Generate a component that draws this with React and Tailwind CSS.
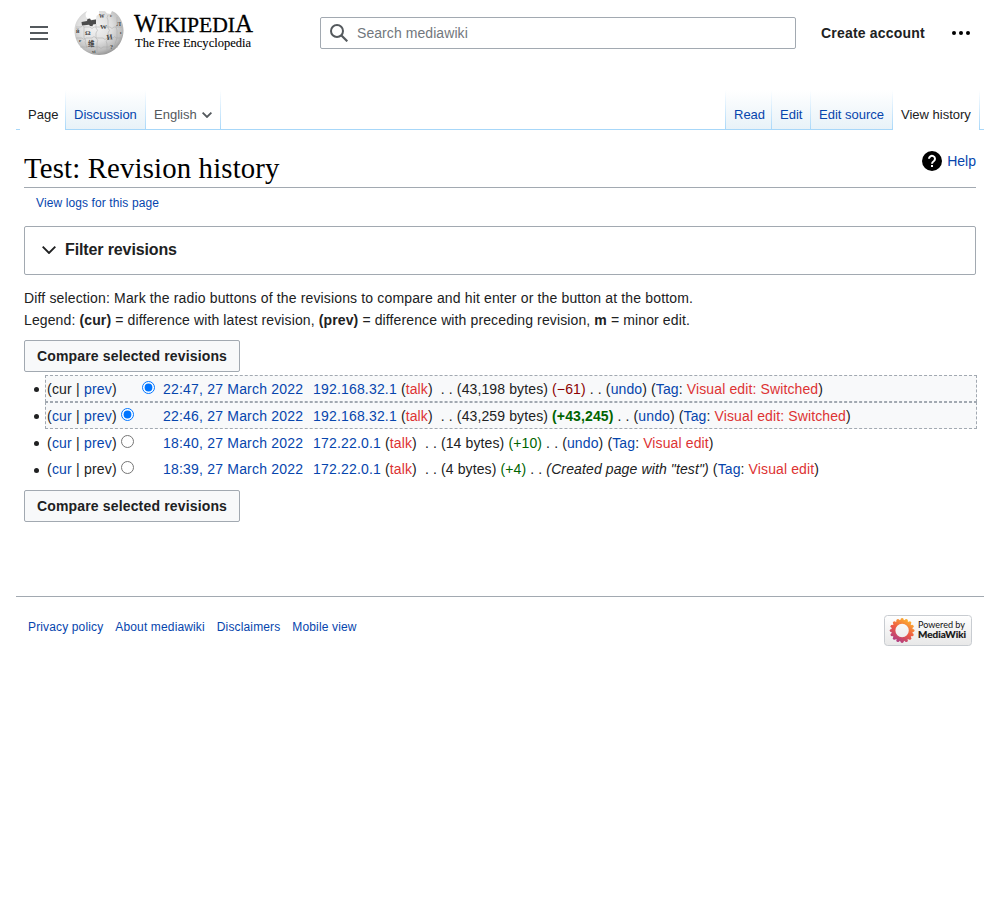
import React from "react";

const LINK = "text-[#0645ad]";

function Globe() {
  return (
    <svg width="50" height="46" viewBox="0 0 50 46" className="block shrink-0">
      <defs>
        <radialGradient id="ball" cx="0.42" cy="0.36" r="0.7">
          <stop offset="0" stopColor="#f4f4f4" />
          <stop offset="0.5" stopColor="#dedede" />
          <stop offset="0.8" stopColor="#bababa" />
          <stop offset="1" stopColor="#858585" />
        </radialGradient>
      </defs>
      <path
        d="M13 1 C5 5 0.5 13 0.500 20.500 C0.500 34 11 45 25 45 C39 45 49.500 34 49.500 20.500 C49.500 13 46 6 41 2.500 L38 1 L36.500 4 L33 3.500 L31 1.200 L25 1 L25 4 L22.500 6 L22 9 L15 10 L12 7 L11.500 4 Z"
        fill="url(#ball)"
      />
      <path d="M7.500 12 L13 11 L13.500 9 L16 8.500 L17 10.300 L22 9.500 L22 14 L19 14.500 L18.500 16.300 L16 16 L15 14.800 L8 15.500 Z" fill="#4c4c4c" />
      <g fill="none" stroke="#a6a6a6" strokeWidth="0.5">
        <path d="M2 17 h5 q2-3 3 0 h6 q2 3 4 0 h6 q2-3 4 0 h6 q2 3 4 0 h8" />
        <path d="M2 28 h6 q2 3 4 0 h6 q2-3 4 0 h7 q2 3 4 0 h6 q2-3 3 0 h6" />
        <path d="M6 37 h7 q2-3 4 0 h8 q2 3 4 0 h6 q2-3 3 0 h6" />
        <path d="M10 17 v11 q3 2 1 4 l2 6 M22 14 v4 q3 2 0 5 v5 q3 2 1 5 v9 M34 5 q-2 3 0 5 v8 q3 2 0 5 v6 q-3 2-1 5 v6 M43 7 v8 q-2 2 0 5 v8 l-3 9" />
      </g>
      <g fill="#444" fontFamily="'Liberation Serif', serif" fontWeight="700" fontSize="7">
        <text x="11" y="25">Ω</text>
        <text x="26" y="18.500" fontSize="7">W</text>
        <text x="33" y="30" fontSize="7.500" transform="rotate(-8 33 30)">И</text>
        <text x="14" y="36" fontSize="6.500" fontFamily="'Noto Sans CJK SC', sans-serif">维</text>
        <text x="2" y="23" fontSize="6">й</text>
        <text x="42.500" y="15.500" fontSize="6">Л</text>
        <text x="36" y="39" fontSize="6">?</text>
        <text x="25" y="7.500" fontSize="5.500">W</text>
        <text x="18" y="43" fontSize="4.500">vi</text>
        <text x="5" y="32" fontSize="5">r</text>
        <text x="46" y="24" fontSize="5">ı</text>
        <text x="36" y="7" fontSize="5">e</text>
      </g>
    </svg>
  );
}

function Wordmark() {
  return (
    <svg width="120" height="46" viewBox="0 0 120 46" className="block shrink-0 overflow-visible">
      <g fontFamily="'Liberation Serif', serif" fill="#000">
        <g stroke="#000" strokeWidth="0.3">
          <text x="0" y="22.300" fontSize="25" textLength="23" lengthAdjust="spacingAndGlyphs">W</text>
          <text x="23" y="22.300" fontSize="20.500" textLength="78" lengthAdjust="spacingAndGlyphs">IKIPEDI</text>
          <text x="101" y="22.300" fontSize="25" textLength="18" lengthAdjust="spacingAndGlyphs">A</text>
        </g>
        <text x="1" y="37" fontSize="13" stroke="#000" strokeWidth="0.1" textLength="116" lengthAdjust="spacingAndGlyphs">The Free Encyclopedia</text>
      </g>
    </svg>
  );
}

function Header() {
  return (
    <header className="flex h-[66px] items-center">
      <svg width="18" height="14" viewBox="0 0 18 14" className="ml-[30px] shrink-0">
        <path d="M0 0h18v2H0zM0 6h18v2H0zM0 12h18v2H0z" fill="#54595d" />
      </svg>
      <a className="ml-[26px] flex h-[46px] w-[180px] items-start gap-[10px]">
        <Globe />
        <Wordmark />
      </a>
      <div className="ml-[66px] flex h-8 w-[476px] shrink-0 items-center rounded-[2px] border border-[#a2a9b1] bg-white pl-[9px]">
        <svg width="18" height="18" viewBox="0 0 18 18" className="shrink-0">
          <circle cx="7" cy="7" r="6" fill="none" stroke="#54595d" strokeWidth="2" />
          <path d="M11 11l6.300 6.300" stroke="#54595d" strokeWidth="2.200" />
        </svg>
        <span className="ml-[9px] text-[14px] tracking-[0.07px] text-[#72777d]">Search mediawiki</span>
      </div>
      <a className="ml-[25px] w-[104px] text-[14px] font-bold tracking-[0.2px] whitespace-nowrap text-[#202122]">Create account</a>
      <svg width="18" height="4" viewBox="0 0 18 4" className="ml-[27px] shrink-0">
        <circle cx="2" cy="2" r="2" />
        <circle cx="9" cy="2" r="2" />
        <circle cx="16" cy="2" r="2" />
      </svg>
    </header>
  );
}

function Tab({ children, width, kind = "link" }) {
  const look = {
    link: "bg-linear-to-t from-[#e8f2f8] to-white text-[#0645ad] border-b border-[#a7d7f9]",
    current: "bg-white text-[#202122]",
    menu: "bg-white text-[#54595d] border-b border-[#a7d7f9]",
  }[kind];
  return (
    <div className={"flex h-[40px] items-start pt-[15px] pl-2 text-[13px] leading-[20px] whitespace-nowrap " + look + " " + width}>
      {children}
    </div>
  );
}

function Divider() {
  return <div className="h-[40px] w-px shrink-0 bg-linear-to-t from-[#a7d7f9] to-white" />;
}

function Tabs() {
  return (
    <nav className="mx-4 mt-[24px] flex">
      <div className="w-1 border-b border-[#a7d7f9]" />
      <Tab kind="current" width="w-[45px]">Page</Tab>
      <Divider />
      <Tab width="w-[79px]">Discussion</Tab>
      <Divider />
      <Tab kind="menu" width="w-[74px]">
        English
        <svg width="10" height="6" viewBox="0 0 10 6" className="mt-[7px] ml-[5px]">
          <path d="M0.600 0.600 5 5 9.400 0.600" fill="none" stroke="#54595d" strokeWidth="1.800" />
        </svg>
      </Tab>
      <Divider />
      <div className="grow border-b border-[#a7d7f9]" />
      <Divider />
      <Tab width="w-[45px]">Read</Tab>
      <Divider />
      <Tab width="w-[38px]">Edit</Tab>
      <Divider />
      <Tab width="w-[81px]">Edit source</Tab>
      <Divider />
      <Tab kind="current" width="w-[86px]">View history</Tab>
      <Divider />
      <div className="w-1 border-b border-[#a7d7f9]" />
    </nav>
  );
}

function CompareButton() {
  return (
    <button className="block h-8 w-[216px] rounded-[2px] border border-[#a2a9b1] bg-[#f8f9fa] text-[14px] font-bold tracking-[0.16px] whitespace-nowrap text-[#202122]">
      Compare selected revisions
    </button>
  );
}

function Radio({ checked }) {
  return (
    <input
      type="radio"
      checked={checked}
      readOnly
      className="mb-[3px] block h-[13px] w-[13px] shrink-0"
    />
  );
}

const REVISIONS = [
  { cur: false, prev: true, column: 2, checked: true, time: "22:47, 27 March 2022", ip: "192.168.32.1", size: "43,198 bytes", diff: "(−61)", tone: "text-[#8b0000]", undo: true, tag: "Visual edit: Switched", height: "h-[27px]", selected: true },
  { cur: true, prev: true, column: 1, checked: true, time: "22:46, 27 March 2022", ip: "192.168.32.1", size: "43,259 bytes", diff: "(+43,245)", tone: "font-bold text-[#006400]", undo: true, tag: "Visual edit: Switched", height: "h-[27px]", selected: true },
  { cur: true, prev: true, column: 1, checked: false, time: "18:40, 27 March 2022", ip: "172.22.0.1", size: "14 bytes", diff: "(+10)", tone: "text-[#006400]", undo: true, tag: "Visual edit", height: "h-[27px]" },
  { cur: true, prev: false, column: 1, checked: false, time: "18:39, 27 March 2022", ip: "172.22.0.1", size: "4 bytes", diff: "(+4)", tone: "text-[#006400]", comment: '(Created page with "test")', tag: "Visual edit", height: "h-[26px]" },
];

function Revision({ r }) {
  return (
    <li className="flex items-center">
      <span className="mt-[2px] mr-[6px] ml-[10px] h-[5px] w-[5px] shrink-0 rounded-full bg-[#202122]" />
      <div
        className={
          "flex w-[932px] shrink-0 items-center border border-dashed pl-px tracking-[0.12px] whitespace-nowrap " +
          (r.selected ? "border-[#a2a9b1] bg-[#f8f9fa] " : "border-transparent ") +
          r.height
        }
      >
        <span className="w-[74px] shrink-0 tracking-[0.2px]">
          (<span className={r.cur ? LINK : ""}>cur</span> | <span className={r.prev ? LINK : ""}>prev</span>)
        </span>
        <span className={"flex w-[42px] shrink-0 " + (r.column === 2 ? "pl-[21px]" : "")}>
          <Radio checked={r.checked} />
        </span>
        <span className="whitespace-pre">
          <a className={"inline-block w-[140px] tracking-[0.2px] " + LINK}>{r.time}</a>
          <a className={"ml-[10px] tracking-[0.18px] " + LINK}>{r.ip}</a> (<a className="text-[#dd3333]">talk</a>){"  . . "}({r.size}){" "}
          <span className={r.tone}>{r.diff}</span>
          {" . . "}
          {r.undo && (
            <>
              (<a className={LINK}>undo</a>)
            </>
          )}
          {r.comment && <i>{r.comment}</i>} (<a className={LINK}>Tag</a>: <a className="text-[#dd3333]">{r.tag}</a>)
        </span>
      </div>
    </li>
  );
}

const PETALS = Array.from({ length: 16 }, (_, i) => {
  const a = (i * Math.PI) / 8;
  return [18.1 + 10.8 * Math.cos(a), 15.5 + 10.8 * Math.sin(a)];
});

function PoweredBy() {
  return (
    <svg width="88" height="31" viewBox="0 0 88 31" className="block shrink-0">
      <defs>
        <linearGradient id="badge" x1="0" y1="0" x2="0" y2="1">
          <stop offset="0" stopColor="#fff" />
          <stop offset="1" stopColor="#e8e8e8" />
        </linearGradient>
        <linearGradient id="flower" gradientUnits="userSpaceOnUse" x1="24" y1="4" x2="11" y2="27">
          <stop offset="0" stopColor="#fdb52e" />
          <stop offset="0.5" stopColor="#ee5a45" />
          <stop offset="1" stopColor="#a8398c" />
        </linearGradient>
      </defs>
      <rect x="0.500" y="0.500" width="87" height="30" rx="3" fill="url(#badge)" stroke="#c8ccd1" />
      <circle cx="18.100" cy="15.500" r="8.700" fill="none" stroke="url(#flower)" strokeWidth="4" />
      {PETALS.map(([x, y]) => (
        <circle key={x + "," + y} cx={x} cy={y} r="1.600" fill="url(#flower)" />
      ))}
      <g fontFamily="Lato, sans-serif" fill="#111">
        <text x="34" y="13.300" fontSize="9.500" textLength="47" lengthAdjust="spacingAndGlyphs">Powered by</text>
        <text x="34" y="23.200" fontSize="9.500" fontWeight="700" stroke="#111" strokeWidth="0.2" textLength="48" lengthAdjust="spacingAndGlyphs">MediaWiki</text>
      </g>
    </svg>
  );
}

export default function App() {
  return (
    <div className="h-[900px] w-[1000px] overflow-hidden bg-white font-['Liberation_Sans',sans-serif] text-[14px] leading-[22px] text-[#202122]">
      <Header />
      <Tabs />
      <main className="px-6">
        <div className="mt-[17px] flex h-[41px] items-start justify-between border-b border-[#a2a9b1]">
          <h1 className="font-['Liberation_Serif',serif] text-[28.800px] leading-[42px] tracking-[0.15px] text-black">Test: Revision history</h1>
          <a className={"mt-[4px] flex h-5 items-center gap-[5px] " + LINK}>
            <svg width="20" height="20" viewBox="0 0 20 20">
              <circle cx="10" cy="10" r="10" fill="#000" />
              <path d="M7 7.800 a3 2.900 0 1 1 4.900 2.200 q-1.900 1.200-1.900 2.800" fill="none" stroke="#fff" strokeWidth="2" />
              <path d="M9 14h2v2H9z" fill="#fff" />
            </svg>
            Help
          </a>
        </div>
        <a className={"mt-[5px] ml-3 block text-[12px] leading-[20px] tracking-[0.11px] " + LINK}>View logs for this page</a>
        <div className="mt-[13px] flex h-[49px] items-center rounded-[2px] border border-[#a2a9b1] pb-px">
          <svg width="14" height="8" viewBox="0 0 14 8" className="mr-[9px] ml-[17px]">
            <path d="M0.700 0.700 7 7 13.300 0.700" fill="none" stroke="#202122" strokeWidth="1.900" />
          </svg>
          <span className="text-[16px] font-bold tracking-[-0.12px]">Filter revisions</span>
        </div>
        <p className="mt-[12px] tracking-[0.15px]">Diff selection: Mark the radio buttons of the revisions to compare and hit enter or the button at the bottom.</p>
        <p className="tracking-[0.12px]">
          Legend: <b>(cur)</b> = difference with latest revision, <b>(prev)</b> = difference with preceding revision, <b>m</b> = minor edit.
        </p>
        <div className="mt-[9px]">
          <CompareButton />
        </div>
        <ul className="mt-[3px]">
          {REVISIONS.map((r) => (
            <Revision key={r.time} r={r} />
          ))}
        </ul>
        <div className="mt-2">
          <CompareButton />
        </div>
      </main>
      <footer className="mx-4 mt-[74px] flex justify-between border-t border-[#a2a9b1] px-3 pt-[18px] text-[12px]">
        <div className={"flex gap-3 leading-[24px] tracking-[0.14px] " + LINK}>
          <a>Privacy policy</a>
          <a>About mediawiki</a>
          <a>Disclaimers</a>
          <a>Mobile view</a>
        </div>
        <PoweredBy />
      </footer>
    </div>
  );
}
